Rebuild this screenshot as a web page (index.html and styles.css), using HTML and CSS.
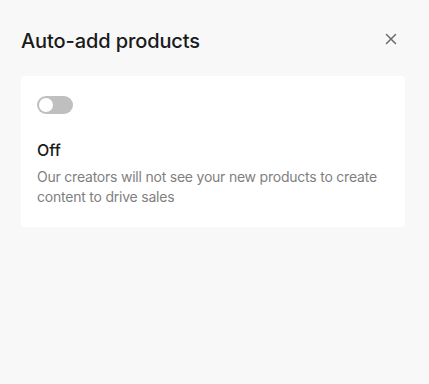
FILE: index.html
```html
<!DOCTYPE html>
<html>
<head>
<meta charset="utf-8">
<link rel="stylesheet" href="styles.css">
</head>
<body>
<div class="panel">
  <div class="header">
    <h1 class="title">Auto-add products</h1>
    <button class="close" aria-label="Close">
      <svg width="12" height="12" viewBox="0 0 12 12"><path d="M1.5 1.5L10.5 10.5M10.5 1.5L1.5 10.5" stroke="#6b6b6b" stroke-width="1.5" stroke-linecap="round"/></svg>
    </button>
  </div>
  <div class="card">
    <div class="toggle"><span class="knob"></span></div>
    <div class="state">Off</div>
    <p class="desc">Our creators will not see your new products to create content to drive sales</p>
  </div>
</div>
</body>
</html>
```
FILE: styles.css
```css
html, body {
  margin: 0;
  padding: 0;
  background: #f8f8f8;
  font-family: Inter, "Noto Sans", sans-serif;
  color: #161823;
}
.panel {
  padding: 28px 24px 0 21px;
}
.header {
  display: flex;
  align-items: center;
  justify-content: space-between;
  height: 26px;
  margin-bottom: 22px;
}
.title {
  margin: 0;
  font-size: 20px;
  font-weight: 500;
  line-height: 26px;
  letter-spacing: -0.1px;
  color: #1a1a1a;
}
.close {
  border: 0;
  background: none;
  padding: 0;
  width: 12px;
  height: 12px;
  margin-top: -4px;
  margin-right: 8px;
  display: flex;
}
.card {
  background: #fff;
  border-radius: 4px;
  padding: 20px 16px 20px 16px;
}
.toggle {
  width: 36px;
  height: 18px;
  border-radius: 9px;
  background: #bfbfbf;
  display: flex;
  align-items: center;
  padding-left: 2px;
  box-sizing: border-box;
}
.knob {
  width: 14px;
  height: 14px;
  border-radius: 50%;
  background: #fff;
}
.state {
  margin-top: 25px;
  font-size: 16px;
  font-weight: 500;
  line-height: 22px;
  color: #1a1a1a;
}
.desc {
  margin: 6px 0 0;
  font-size: 14px;
  line-height: 20px;
  letter-spacing: -0.22px;
  color: #7f7f7f;
}
```
